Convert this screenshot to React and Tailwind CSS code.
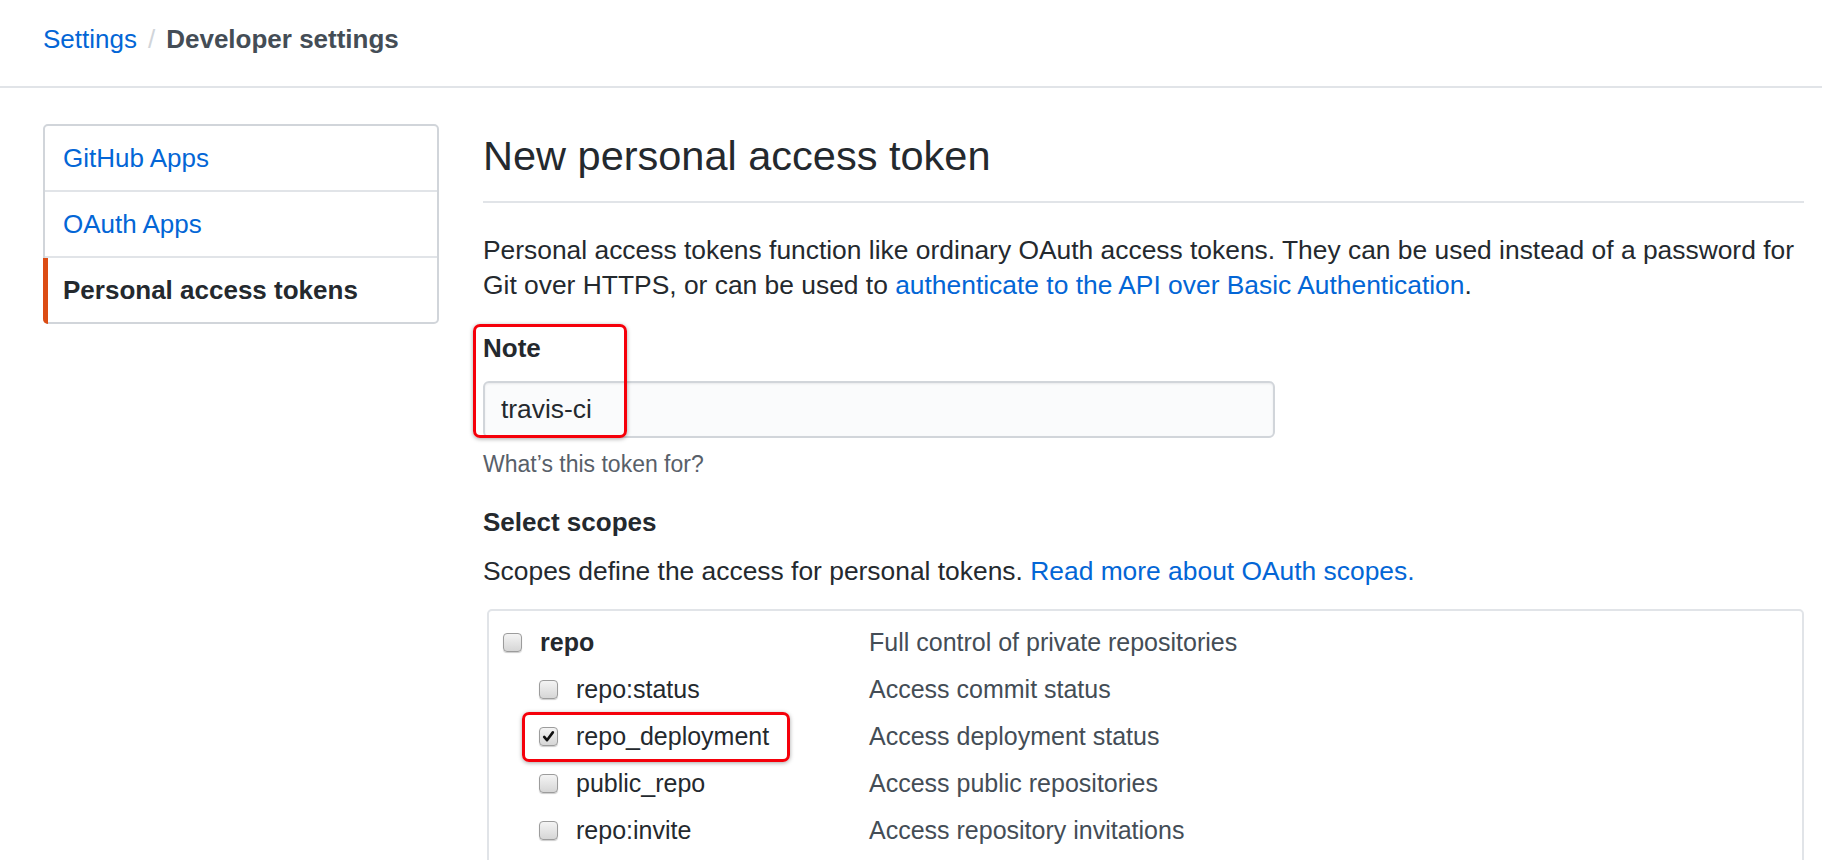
import React from 'react';

const scopes = [
  { name: 'repo', desc: 'Full control of private repositories', top: true },
  { name: 'repo:status', desc: 'Access commit status' },
  { name: 'repo_deployment', desc: 'Access deployment status', checked: true, marked: true },
  { name: 'public_repo', desc: 'Access public repositories' },
  { name: 'repo:invite', desc: 'Access repository invitations' },
];

const Checkbox = ({ checked }) => (
  <span className="flex items-center justify-center w-[19px] h-[19px] shrink-0 rounded-[4px] border border-[#9c9c9c] bg-linear-to-b from-[#f4f4f4] to-[#d6d6d6] shadow-[0_1px_1px_rgba(0,0,0,0.2)]">
    {checked && (
      <svg width="13" height="13" viewBox="0 0 12 12">
        <path d="M2 6.4 L4.6 9.4 L10 2.2" fill="none" stroke="#111" strokeWidth="2.4" strokeLinecap="round" strokeLinejoin="round" />
      </svg>
    )}
  </span>
);

const MenuItem = ({ children, active, last }) => (
  <div
    className={`relative flex items-center pl-[18px] text-[26px] ${last ? 'h-[64px]' : 'h-[66px] border-b-2 border-[#e1e4e8]'} ${active ? 'font-bold text-[#24292e]' : 'text-[#0366d6]'}`}
  >
    {active && <span className="absolute -left-[2px] top-0 -bottom-[2px] w-[5px] rounded-bl-[5px] bg-[#dc4c14]" />}
    {children}
  </div>
);

const App = () => {
  return (
    <div className="h-[860px] overflow-hidden bg-white font-['Liberation_Sans',Arial,sans-serif] text-[#24292e]">
      {/* Breadcrumb */}
      <div className="flex items-center h-[88px] pb-[8px] pl-[43px] border-b-2 border-[#e1e4e8] text-[26px]">
        <span className="text-[#0366d6]">Settings</span>
        <span className="px-[11px] text-[#d1d5da]">/</span>
        <span className="font-bold text-[#444d56]">Developer settings</span>
      </div>

      <div className="flex gap-[44px] pt-[36px] pl-[43px] pr-[18px]">
        {/* Sidebar */}
        <div className="w-[396px] shrink-0 self-start rounded-[5px] border-2 border-[#d1d5da]">
          <MenuItem>GitHub Apps</MenuItem>
          <MenuItem>OAuth Apps</MenuItem>
          <MenuItem active last>Personal access tokens</MenuItem>
        </div>

        {/* Main */}
        <div className="flex-1 min-w-0">
          <h2 className="mt-[6px] pb-[19px] border-b-2 border-[#e1e4e8] text-[41.5px] leading-[52px] font-normal">
            New personal access token
          </h2>

          <p className="mt-[30px] text-[26.4px] leading-[35px] whitespace-nowrap">
            Personal access tokens function like ordinary OAuth access tokens. They can be used instead of a password for
            <br />
            Git over HTTPS, or can be used to{' '}
            <span className="text-[#0366d6]">authenticate to the API over Basic Authentication</span>.
          </p>

          <div className="relative mt-[28px]">
            <div className="text-[26px] leading-[35px] font-bold">Note</div>
            <div className="mt-[15px] flex items-center w-[792px] h-[57px] pl-[16px] rounded-[6px] border-2 border-[#d1d5da] bg-[#fafbfc] text-[26.4px] shadow-[inset_0_1px_2px_rgba(27,31,35,0.075)]">
              travis-ci
            </div>
            <div className="absolute -left-[10px] -top-[7px] w-[154px] h-[114px] rounded-[7px] border-[3px] border-[#f5000a] shadow-[0_1px_4px_rgba(0,0,0,0.35)]" />
          </div>

          <div className="mt-[11px] text-[23px] leading-[30px] text-[#586069]">What’s this token for?</div>

          <div className="mt-[26px] text-[26px] leading-[35px] font-bold">Select scopes</div>
          <p className="mt-[14px] text-[26.4px] leading-[35px]">
            Scopes define the access for personal tokens.{' '}
            <span className="text-[#0366d6]">Read more about OAuth scopes.</span>
          </p>

          <div className="mt-[20px] ml-[4px] rounded-[5px] border-2 border-[#e1e4e8] pt-[8px] pb-[60px]">
            {scopes.map((s) => (
              <div key={s.name} className="relative flex items-center h-[47px] pl-[14px] text-[25px]">
                <div className={`flex items-center gap-[18px] w-[366px] shrink-0 ${s.top ? '' : 'pl-[36px]'}`}>
                  <Checkbox checked={s.checked} />
                  <span className={s.top ? 'font-bold text-[#24292e]' : 'text-[#24292e]'}>{s.name}</span>
                </div>
                <span className="text-[#444d56]">{s.desc}</span>
                {s.marked && (
                  <div className="absolute left-[33px] -top-[1px] w-[268px] h-[50px] rounded-[7px] border-[3px] border-[#f5000a] shadow-[0_1px_4px_rgba(0,0,0,0.35)]" />
                )}
              </div>
            ))}
          </div>
        </div>
      </div>
    </div>
  );
};

export default App;
